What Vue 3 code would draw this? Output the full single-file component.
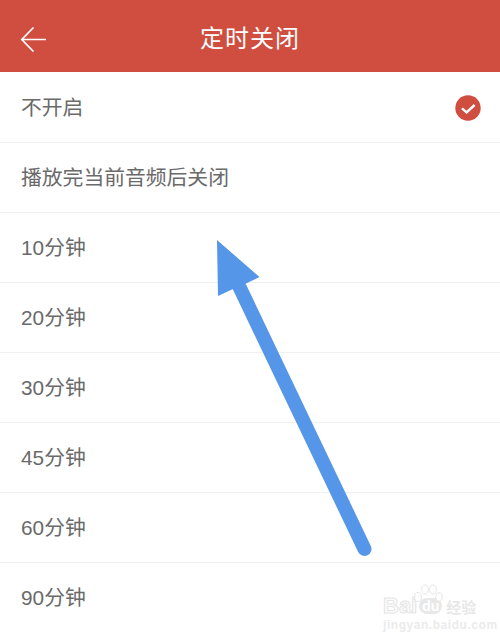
<template>
  <div class="page">
    <header class="top-bar">
      <button class="back">
        <svg width="28" height="26" viewBox="0 0 28 26">
          <path d="M26 13.5H2M13.5 1.5 1.8 13.5 13.5 25.5" fill="none" stroke="#fff" stroke-width="1.7" />
        </svg>
      </button>
      <h1 class="title">定时关闭</h1>
    </header>

    <ul class="list">
      <li v-for="item in options" :key="item" class="row">
        <span>{{ item }}</span>
        <svg v-if="item === selected" class="check" width="26" height="26" viewBox="0 0 26 26">
          <circle cx="13" cy="13" r="12.7" fill="#cf4e40" />
          <path d="M7 13.4 11.6 17.4 19.6 10" fill="none" stroke="#fff" stroke-width="2.4" />
        </svg>
      </li>
    </ul>

    <!-- 标注箭头 -->
    <svg class="arrow" width="500" height="639" viewBox="0 0 500 639">
      <path d="M239 286 364.5 549" fill="none" stroke="#5596e8" stroke-width="14" stroke-linecap="round" />
      <path d="M217 240 259.5 277 245 284 233 289 218 296Z" fill="#5596e8" />
    </svg>

    <!-- 水印 -->
    <div class="mark">
      <svg class="paw" width="30" height="24" viewBox="0 0 30 24">
        <g fill="#fff" stroke="#e6e6e6" stroke-width="1">
          <ellipse cx="5" cy="13" rx="3.4" ry="4.5" />
          <ellipse cx="12" cy="5.5" rx="3.4" ry="4.5" />
          <ellipse cx="20" cy="5.5" rx="3.4" ry="4.5" />
          <ellipse cx="26" cy="13" rx="3.2" ry="4.3" />
        </g>
      </svg>
      <div class="mark-top">
        <span class="mark-bai">Bai</span>
        <span class="mark-du">du</span>
        <span class="mark-cn">经验</span>
      </div>
      <div class="mark-url">jingyan.baidu.com</div>
    </div>
  </div>
</template>

<script setup>
const selected = '不开启'
const options = [
  '不开启',
  '播放完当前音频后关闭',
  '10分钟',
  '20分钟',
  '30分钟',
  '45分钟',
  '60分钟',
  '90分钟'
]
</script>

<style>
html,
body {
  margin: 0;
  background: #fff;
}
</style>

<style scoped>
.page {
  position: relative;
  width: 500px;
  height: 639px;
  overflow: hidden;
  background: #fff;
  font-family: "Liberation Sans", "Noto Sans CJK SC", sans-serif;
}

.top-bar {
  display: flex;
  align-items: center;
  justify-content: center;
  position: relative;
  height: 72px;
  background: #cf4e40;
}

.back {
  position: absolute;
  left: 20px;
  top: 26px;
  display: block;
  padding: 0;
  border: 0;
  background: none;
  line-height: 0;
}

.title {
  margin: 0 0 -1px;
  font-size: 24px;
  font-weight: 400;
  letter-spacing: 1px;
  color: #fff;
}

.list {
  margin: 0;
  padding: 1px 0 0;
  list-style: none;
}

.row {
  display: flex;
  align-items: center;
  justify-content: space-between;
  box-sizing: border-box;
  height: 70px;
  padding: 0 19px 3px 21px;
  border-bottom: 1px solid #f0f0f0;
  font-size: 20.8px;
  color: #6a6a6a;
}

.row:last-child {
  border-bottom-color: transparent;
}

.check {
  margin-top: 4px;
}

.arrow {
  position: absolute;
  left: 0;
  top: 0;
}

.mark {
  position: absolute;
  left: 383px;
  top: 597px;
  width: 100px;
  color: #fff;
}

.paw {
  position: absolute;
  left: 30px;
  top: -13px;
}

.mark-top {
  display: flex;
  align-items: center;
  height: 18px;
}

.mark-bai {
  font-size: 22px;
  font-weight: 700;
  color: #fbfbfb;
  -webkit-text-stroke: 1px #e6e6e6;
}

.mark-du {
  margin-left: 2px;
  padding: 0 3px;
  border-radius: 9px;
  font-size: 14px;
  font-weight: 700;
  color: #fff;
  background: #e8e8e8;
}

.mark-cn {
  margin-left: 4px;
  font-size: 15px;
  font-weight: 700;
  color: #e8e8e8;
  white-space: nowrap;
}

.mark-url {
  margin-top: 3px;
  font-size: 12px;
  font-weight: 700;
  letter-spacing: 0.55px;
  color: #ebebeb;
  white-space: nowrap;
}
</style>
